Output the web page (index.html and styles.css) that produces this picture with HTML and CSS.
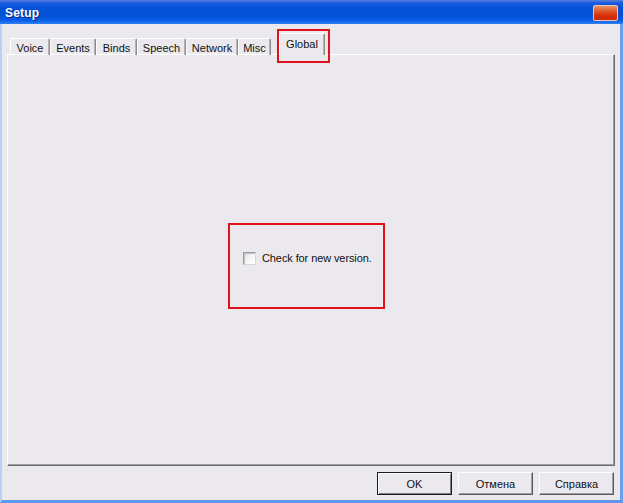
FILE: index.html
```html
<!DOCTYPE html>
<html lang="en">

<head>
    <meta charset="UTF-8">
    <title>Setup</title>
    <link rel="stylesheet" href="styles.css">
</head>

<body>

    <div class="window">
        <div class="titlebar">
            <span class="titlebar__text">Setup</span>
            <span class="titlebar__close"></span>
        </div>

        <div class="frame">
            <div class="tabs">
                <div class="tab tab--voice">Voice</div>
                <div class="tab tab--events">Events</div>
                <div class="tab tab--binds">Binds</div>
                <div class="tab tab--speech">Speech</div>
                <div class="tab tab--network">Network</div>
                <div class="tab tab--misc">Misc</div>
                <div class="tab tab--active">Global</div>
            </div>

            <div class="sheet">
                <label class="check">
                    <span class="check__box"></span>
                    <span class="check__text">Check for new version.</span>
                </label>
            </div>

            <div class="buttons">
                <button class="btn btn--default">OK</button>
                <button class="btn">Отмена</button>
                <button class="btn">Справка</button>
            </div>
        </div>

        <!-- red annotation frames -->
        <div class="mark mark--tab"></div>
        <div class="mark mark--check"></div>
    </div>

</body>

</html>
```

FILE: styles.css
```css
* {
    padding: 0;
    margin: 0;
    box-sizing: border-box;
}

body {
    background-color: #ebe9ed;
    font-family: "Liberation Sans", Arial, sans-serif;
    font-size: 11px;
    color: #111;
}

.window {
    position: relative;
    width: 623px;
    height: 503px;
    display: flex;
    flex-direction: column;
    background-color: #ebe9ed;
}

.titlebar {
    height: 24px;
    display: flex;
    justify-content: space-between;
    align-items: center;
    padding: 0 5px 0 5px;
    background: linear-gradient(#5a82dc 0, #1a5ade 3px, #0352d9 8px, #0250d6 65%, #0b5de8 85%, #2f82f2 100%);
}

.titlebar__text {
    color: white;
    font-weight: bold;
    font-size: 12px;
    letter-spacing: 0.2px;
    text-shadow: 1px 1px #0c2a8c;
    margin-top: 1px;
}

.titlebar__close {
    width: 25px;
    height: 16px;
    margin-top: 1px;
    border: 1px solid #efc8b4;
    border-radius: 2px;
    background: linear-gradient(#e9946a 0, #e05a2c 35%, #d62d06 70%, #c92a0a 100%);
}

.frame {
    flex: 1;
    display: flex;
    flex-direction: column;
    border-left: 2px solid #b8d0f4;
    border-right: 3px solid #6a9ef0;
    border-bottom: 3px solid #5f96ee;
    padding: 0 5px;
}

.tabs {
    display: flex;
    align-items: flex-end;
    margin-top: 9px;
    margin-bottom: -1px;
    padding-left: 3px;
    height: 22px;
    position: relative;
    z-index: 1;
}

.tab {
    height: 17px;
    display: flex;
    align-items: center;
    justify-content: center;
    border-top: 1px solid white;
    border-left: 1px solid white;
    border-right: 1px solid #8c8c8c;
    box-shadow: inset -1px 0 #b4b4b4;
    border-radius: 2px 2px 0 0;
    padding-top: 2px;
}

.tab--voice {
    width: 40px;
}

.tab--events {
    width: 46px;
}

.tab--binds {
    width: 41px;
}

.tab--speech {
    width: 49px;
}

.tab--network {
    width: 52px;
}

.tab--misc {
    width: 33px;
}

.tab--active {
    width: 46px;
    height: 22px;
    margin-left: 8px;
    background-color: #ebe9ed;
    padding-top: 0;
    padding-bottom: 2px;
}

.sheet {
    height: 412px;
    border-top: 1px solid white;
    border-left: 1px solid white;
    border-right: 1px solid #6e6e6e;
    border-bottom: 1px solid #6e6e6e;
    box-shadow: inset -1px -1px #a0a0a0;
    padding: 197px 0 0 235px;
}

.check {
    display: flex;
    align-items: center;
}

.check__box {
    width: 13px;
    height: 13px;
    margin-right: 6px;
    border: 1px solid #9a9a9a;
    border-right-color: #d8d8d8;
    border-bottom-color: #d8d8d8;
    background: linear-gradient(135deg, #dcdcdc 0, #f4f4f4 50%, #ffffff 100%);
    box-shadow: inset 1px 1px #c4c4c4;
}

.check__text {
    line-height: 13px;
    letter-spacing: -0.1px;
}

.buttons {
    display: flex;
    justify-content: flex-end;
    gap: 6px;
    margin-top: 6px;
    padding-right: 1px;
}

.btn {
    width: 75px;
    height: 23px;
    font-family: "Liberation Sans", Arial, sans-serif;
    font-size: 11px;
    color: #111;
    background-color: #ebe9ed;
    border: 1px solid;
    border-color: #fdfdfd #5a5a5a #5a5a5a #fdfdfd;
    box-shadow: inset -1px -1px #a0a0a0;
}

.btn--default {
    border: 1px solid #1a1a1a;
    box-shadow: inset 1px 1px #fdfdfd, inset -1px -1px #808080;
}

.mark {
    position: absolute;
    border: 2px solid #e0101c;
}

.mark--tab {
    left: 277px;
    top: 29px;
    width: 53px;
    height: 34px;
}

.mark--check {
    left: 228px;
    top: 223px;
    width: 157px;
    height: 86px;
}
```
